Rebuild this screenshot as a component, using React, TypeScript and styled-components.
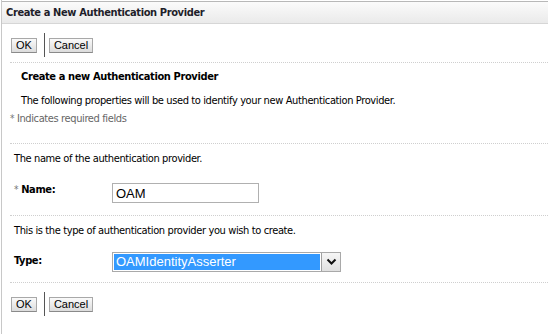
import styled, { createGlobalStyle } from "styled-components"

const GlobalStyle = createGlobalStyle`
    html, body {
        margin: 0;
        padding: 0;
        background: #ffffff;
    }
    body {
        font-family: "DejaVu Sans Condensed", "DejaVu Sans", sans-serif;
        font-size: 11px;
        letter-spacing: -0.38px;
        color: #000000;
    }
`

const ButtonBar = () => (
    <Bar>
        <Button>OK</Button>
        <Separator />
        <Button>Cancel</Button>
    </Bar>
)

const App = () => {
    return (
        <>
            <GlobalStyle />
            <Page>
                <Header>Create a New Authentication Provider</Header>
                <ButtonBar />
                <Divider />
                <Intro>
                    <Heading>Create a new Authentication Provider</Heading>
                    <Text>The following properties will be used to identify your new Authentication Provider.</Text>
                    <Required><Star>*</Star> Indicates required fields</Required>
                </Intro>
                <Divider />
                <Section>
                    <Text>The name of the authentication provider.</Text>
                    <Field $gap={18}>
                        <Label $offset={0}><Star>*</Star> Name:</Label>
                        <TextInput defaultValue="OAM" />
                    </Field>
                </Section>
                <Divider $top={12} />
                <Section>
                    <Text>This is the type of authentication provider you wish to create.</Text>
                    <Field $gap={15}>
                        <Label $offset={2}>Type:</Label>
                        <Select>
                            <Selected>OAMIdentityAsserter</Selected>
                            <Arrow>
                                <svg width="11" height="8" viewBox="0 0 11 8">
                                    <path d="M1.5 1.5 L5.5 5.5 L9.5 1.5" fill="none" stroke="#111" strokeWidth="2" />
                                </svg>
                            </Arrow>
                        </Select>
                    </Field>
                </Section>
                <Divider $top={10} />
                <ButtonBar />
            </Page>
        </>
    )
}
export default App


const Page = styled.div`
    margin-left: 1px;
    padding-top: 1px;
    min-height: 333px;
    border-left: 1px solid #c8c8c8;
`

const Header = styled.div`
    height: 21px;
    line-height: 21px;
    padding-left: 4px;
    border-top: 1px solid #b8b8b8;
    border-bottom: 1px solid #d6d6d6;
    background: linear-gradient(#fbfbfb, #eaeaea);
    font-weight: bold;
    color: #1e1e2a;
`

const Bar = styled.div`
    display: flex;
    align-items: center;
    padding: 9px 0 0 9px;
`

const Button = styled.button`
    height: 15px;
    padding: 0 4px;
    border: 1px solid #a8a8a8;
    border-bottom-color: #8a8a8a;
    border-radius: 0;
    background: linear-gradient(#fafafa, #dcdcdc);
    font-family: "Liberation Sans", Arial, sans-serif;
    font-size: 11px;
    letter-spacing: 0;
    line-height: 13px;
    color: #000;
`

const Separator = styled.span`
    width: 1px;
    height: 24px;
    margin: 0 4px 0 7px;
    background: #555;
`

const Divider = styled.div<{ $top?: number }>`
    margin: ${({ $top }) => $top ?? 5}px 0 0 8px;
    border-top: 1px dotted #cfcfcf;
`

const Intro = styled.div`
    padding: 7px 0 0 8px;
    margin-bottom: 18px;
`

const Heading = styled.div`
    padding-left: 11px;
    font-weight: bold;
    line-height: 13px;
`

const Text = styled.div`
    line-height: 13px;
    ${Intro} & {
        padding-left: 11px;
        margin-top: 11px;
    }
`

const Required = styled.div`
    margin-top: 5px;
    line-height: 13px;
    color: #666;
`

const Star = styled.span`
    color: #777;
    font-size: 10px;
`

const Section = styled.div`
    padding: 8px 0 0 12px;
`

const Field = styled.div<{ $gap: number }>`
    display: grid;
    grid-template-columns: 98px auto;
    align-items: start;
    margin-top: ${({ $gap }) => $gap}px;
`

const Label = styled.div<{ $offset: number }>`
    padding-top: ${({ $offset }) => $offset}px;
    line-height: 13px;
    font-weight: bold;
    ${Star} {
        font-weight: normal;
    }
`

const TextInput = styled.input`
    box-sizing: border-box;
    width: 147px;
    height: 20px;
    padding: 0 3px;
    border: 1px solid #b0b0b0;
    outline: none;
    font-family: "Liberation Sans", Arial, sans-serif;
    font-size: 13px;
    letter-spacing: 0;
    color: #000;
`

const Select = styled.div`
    display: flex;
    box-sizing: border-box;
    width: 229px;
    height: 20px;
    border: 1px solid #a9a9a9;
`

const Selected = styled.div`
    flex: 1;
    margin: 1px;
    padding-left: 2px;
    background: #3399ff;
    color: #fff;
    font-family: "Liberation Sans", Arial, sans-serif;
    font-size: 13px;
    letter-spacing: 0;
    line-height: 16px;
`

const Arrow = styled.div`
    display: flex;
    align-items: center;
    justify-content: center;
    width: 18px;
    border-left: 1px solid #a0a0a0;
    background: linear-gradient(#f6f6f6, #e0e0e0);
`
